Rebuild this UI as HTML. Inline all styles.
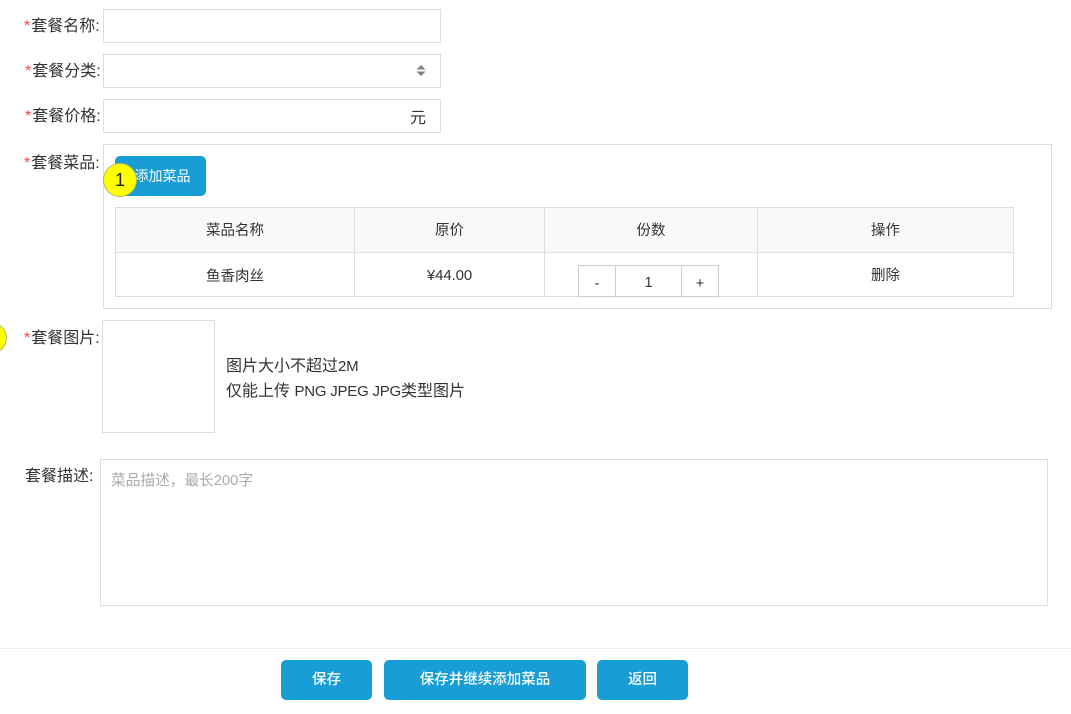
<!DOCTYPE html>
<html lang="zh-CN">
<head>
<meta charset="utf-8">
<title>套餐</title>
<style>
html,body{margin:0;padding:0;background:#fff;}
body{width:1071px;height:714px;position:relative;overflow:hidden;font-family:"Liberation Sans","Noto Sans CJK SC",sans-serif;color:#333;}
.a{position:absolute;box-sizing:border-box;}
.t{position:absolute;white-space:nowrap;line-height:20px;}
.b{border:1px solid #dcdcdc;background:#fff;}
.l{font-size:16px;color:#333;}
.l i{font-style:normal;color:#f44;margin-right:1px;}
.c{position:absolute;text-align:center;font-size:14.5px;line-height:20px;color:#333;white-space:nowrap;}
.n{font-size:15px;letter-spacing:-.22px;}
.btn{position:absolute;box-sizing:border-box;background:#189dd6;border-radius:5px;color:#fff;text-align:center;font-size:14.5px;font-weight:500;height:40px;line-height:40px;top:660px;}
.line{position:absolute;background:#dedede;}
</style>
</head>
<body>
<div class="t l" style="left:24px;top:17px;"><i>*</i>套餐名称:</div>
<div class="a b" style="left:103px;top:9px;width:338px;height:34px;"></div>

<div class="t l" style="left:25px;top:62px;"><i>*</i>套餐分类:</div>
<div class="a b" style="left:103px;top:54px;width:338px;height:34px;"></div>
<svg class="a" style="left:416px;top:64px;" width="10" height="13" viewBox="0 0 10 13"><path d="M0.5 5.5L5 1L9.5 5.5Z M0.5 7.5H9.5L5 12Z" fill="#808080"/></svg>

<div class="t l" style="left:25px;top:107px;"><i>*</i>套餐价格:</div>
<div class="a b" style="left:103px;top:99px;width:338px;height:34px;"></div>
<div class="t" style="left:410px;top:109px;font-size:16px;">元</div>

<div class="t l" style="left:24px;top:154px;"><i>*</i>套餐菜品:</div>
<div class="a b" style="left:103px;top:144px;width:949px;height:165px;"></div>
<div class="a" style="left:115px;top:156px;width:91px;height:40px;background:#189dd6;border-radius:5px;color:#fff;font-size:14px;line-height:40px;text-align:center;padding-left:4px;">添加菜品</div>
<div class="a" style="left:103px;top:163px;width:34px;height:34px;border-radius:50%;background:#ff0;border:1px solid #b5b56a;color:#222;font-size:18px;line-height:32px;text-align:center;">1</div>

<!-- table -->
<div class="a" style="left:115px;top:207px;width:899px;height:46px;background:#f8f9fb;"></div>
<div class="line" style="left:115px;top:207px;width:899px;height:1px;"></div>
<div class="line" style="left:115px;top:252px;width:899px;height:1px;"></div>
<div class="line" style="left:115px;top:296px;width:899px;height:1px;"></div>
<div class="line" style="left:115px;top:207px;width:1px;height:90px;"></div>
<div class="line" style="left:354px;top:207px;width:1px;height:90px;"></div>
<div class="line" style="left:544px;top:207px;width:1px;height:90px;"></div>
<div class="line" style="left:757px;top:207px;width:1px;height:90px;"></div>
<div class="line" style="left:1013px;top:207px;width:1px;height:90px;"></div>

<div class="c" style="left:116px;width:238px;top:221px;">菜品名称</div>
<div class="c" style="left:355px;width:189px;top:221px;">原价</div>
<div class="c" style="left:545px;width:212px;top:221px;">份数</div>
<div class="c" style="left:758px;width:255px;top:221px;">操作</div>
<div class="c" style="left:116px;width:238px;top:267px;">鱼香肉丝</div>
<div class="c" style="left:355px;width:189px;top:266px;font-size:15px;letter-spacing:-.1px;">¥44.00</div>
<div class="c" style="left:758px;width:255px;top:266px;">删除</div>

<div class="a" style="left:578px;top:265px;width:141px;height:32px;border:1px solid #ccc;background:#fff;"></div>
<div class="line" style="left:615px;top:265px;width:1px;height:32px;background:#ccc;"></div>
<div class="line" style="left:681px;top:265px;width:1px;height:32px;background:#ccc;"></div>
<div class="c" style="left:579px;width:36px;top:274px;">-</div>
<div class="c" style="left:616px;width:65px;top:273px;">1</div>
<div class="c" style="left:682px;width:36px;top:274px;">+</div>

<!-- image -->
<div class="a" style="left:0;top:322px;width:7px;height:31px;overflow:hidden;"><div class="a" style="left:-27px;top:0;width:34px;height:32px;border-radius:50%;background:#ff0;border:1px solid #b5b56a;"></div></div>
<div class="t l" style="left:24px;top:329px;"><i>*</i>套餐图片:</div>
<div class="a b" style="left:102px;top:320px;width:113px;height:113px;"></div>
<div class="t" style="left:226px;top:354px;font-size:16px;line-height:25px;height:25px;">图片大小不超过<span class="n">2M</span></div>
<div class="t" style="left:226px;top:379px;font-size:16px;line-height:25px;height:25px;">仅能上传 <span class="n">PNG JPEG JPG</span>类型图片</div>

<!-- desc -->
<div class="t l" style="left:25px;top:467px;">套餐描述:</div>
<div class="a b" style="left:100px;top:459px;width:948px;height:147px;"></div>
<div class="t" style="left:111px;top:471px;font-size:14.7px;color:#aaa;">菜品描述，最长200字</div>

<!-- footer -->
<div class="line" style="left:0;top:648px;width:1071px;height:1px;background:#ececec;"></div>
<div class="btn" style="left:281px;width:91px;">保存</div>
<div class="btn" style="left:384px;width:202px;">保存并继续添加菜品</div>
<div class="btn" style="left:597px;width:91px;">返回</div>
</body>
</html>
